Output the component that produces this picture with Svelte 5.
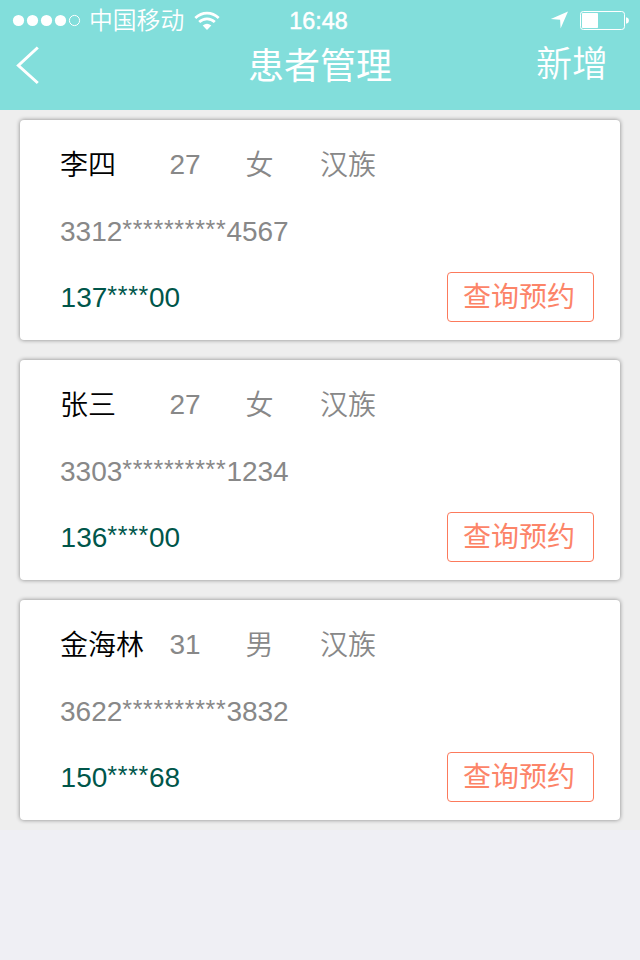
<script>
  const patients = [
    { name: '李四', age: 27, sex: '女', nation: '汉族', id: ['3312', '4567'], phone: ['137', '00'] },
    { name: '张三', age: 27, sex: '女', nation: '汉族', id: ['3303', '1234'], phone: ['136', '00'] },
    { name: '金海林', age: 31, sex: '男', nation: '汉族', id: ['3622', '3832'], phone: ['150', '68'] }
  ];
</script>

<div class="screen">
  <header>
    <div class="status">
      <div class="carrier">
        <svg class="signal" width="70" height="14" viewBox="0 0 70 14">
          <g fill="#fff">
            <circle cx="6.5" cy="7.5" r="5.6" />
            <circle cx="20.5" cy="7.5" r="5.6" />
            <circle cx="34.5" cy="7.5" r="5.6" />
            <circle cx="48.5" cy="7.5" r="5.6" />
          </g>
          <circle cx="62.5" cy="7.5" r="5.1" fill="none" stroke="#fff" />
        </svg>
        <span class="operator">中国移动</span>
        <svg class="wifi" width="26" height="19" viewBox="0 0 26 19">
          <g fill="none" stroke="#fff" stroke-width="2.7">
            <path d="M1.3 7Q6.5 2.1 13 2.1T24.7 7" />
            <path d="M5.2 11Q8.6 7.8 13 7.8T20.8 11" />
          </g>
          <path d="M8.7 14.6Q13 10.7 17.3 14.6L13 19Z" fill="#fff" />
        </svg>
      </div>
      <span class="clock">16:48</span>
      <div class="power">
        <svg width="19" height="18" viewBox="0 0 19 18">
          <path d="M18 0.5L10.6 17.6L10.1 8.7L0.8 8Z" fill="#fff" />
        </svg>
        <svg width="49" height="19" viewBox="0 0 49 19">
          <rect x="0.5" y="0.5" width="44" height="18" rx="2.8" fill="none" stroke="#fff" />
          <rect x="2" y="2" width="16" height="15" rx="0.7" fill="#fff" />
          <path d="M46 6.2Q48.9 6.8 48.9 9.5T46 12.8Z" fill="#fff" />
        </svg>
      </div>
    </div>
    <nav>
      <button class="back" aria-label="返回">
        <svg width="26" height="40" viewBox="0 0 26 40">
          <path d="M22.8 2.5L3.4 20.5L22.8 38" fill="none" stroke="#fff" stroke-width="3" />
        </svg>
      </button>
      <h1>患者管理</h1>
      <button class="add">新增</button>
    </nav>
  </header>

  <main>
    {#each patients as p}
      <article>
        <div class="row">
          <span class="name">{p.name}</span>
          <span class="age">{p.age}</span>
          <span class="sex">{p.sex}</span>
          <span class="nation">{p.nation}</span>
        </div>
        <div class="row"><span>{p.id[0]}<span class="mask">**********</span>{p.id[1]}</span></div>
        <div class="row last">
          <span class="phone">{p.phone[0]}<span class="mask">****</span>{p.phone[1]}</span>
          <button class="query">查询预约</button>
        </div>
      </article>
    {/each}
  </main>
</div>

<style>
  :global(body) {
    background: #efeff4;
  }
  .screen {
    height: 960px;
    overflow: hidden;
    font-family: 'Liberation Sans', 'Noto Sans CJK SC', sans-serif;
    font-weight: 350;
    background: #efeff4;
  }
  button {
    margin: 0;
    padding: 0;
    border: 0;
    background: none;
    font: inherit;
    color: inherit;
  }
  svg {
    display: block;
  }
  header {
    box-sizing: border-box;
    height: 110px;
    background: #82dedb;
    color: #fff;
  }
  .status {
    display: grid;
    grid-template-columns: 1fr auto 1fr;
    align-items: center;
    height: 40px;
    padding: 0 11px 0 12px;
  }
  .carrier {
    display: flex;
    align-items: center;
    height: 40px;
  }
  .operator {
    margin-left: 7px;
    padding-top: 2px;
    font-size: 23.8px;
    line-height: 40px;
  }
  .wifi {
    margin-left: 10px;
  }
  .clock {
    margin-right: 4px;
    padding-top: 2px;
    font-size: 23.3px;
    line-height: 38px;
    -webkit-text-stroke: 0.5px #fff;
  }
  .power {
    display: flex;
    justify-content: flex-end;
    align-items: center;
    gap: 11px;
  }
  nav {
    display: grid;
    grid-template-columns: 1fr auto 1fr;
    align-items: center;
    height: 50px;
    padding: 0 32px 0 15px;
  }
  .back {
    justify-self: start;
  }
  h1 {
    margin: 4px 0 0 17px;
    font-size: 36px;
    line-height: 46px;
    font-weight: 400;
  }
  .add {
    justify-self: end;
    font-size: 36px;
    line-height: 48px;
  }
  main {
    display: flex;
    flex-direction: column;
    gap: 20px;
    padding: 10px 20px;
    background: #eee;
  }
  article {
    box-sizing: border-box;
    height: 220px;
    padding: 12px 26px 8px 40px;
    border-radius: 4px;
    background: #fff;
    box-shadow: 0 0 4px rgba(0, 0, 0, 0.45);
    font-size: 28px;
    color: #888;
  }
  .row {
    display: flex;
    align-items: center;
    height: 66.7px;
    line-height: 66.7px;
    white-space: nowrap;
  }
  .name {
    width: 109.5px;
    padding-top: 2px;
    color: #000;
  }
  .age {
    width: 76px;
  }
  .sex {
    width: 74.5px;
    padding-top: 2px;
  }
  .nation {
    padding-top: 2px;
  }
  .mask {
    font-size: 25px;
    line-height: 1;
    letter-spacing: 0.68px;
    vertical-align: 3px;
  }
  .last {
    justify-content: space-between;
  }
  .phone {
    padding-left: 0.6px;
    color: #00564a;
  }
  .query {
    box-sizing: border-box;
    width: 147px;
    height: 50px;
    margin-bottom: 4px;
    padding: 1px 3px 0 0;
    border: 1px solid #fc7a5c;
    border-radius: 4px;
    line-height: 47px;
    font-weight: 400;
    color: #fc8468;
  }
</style>
